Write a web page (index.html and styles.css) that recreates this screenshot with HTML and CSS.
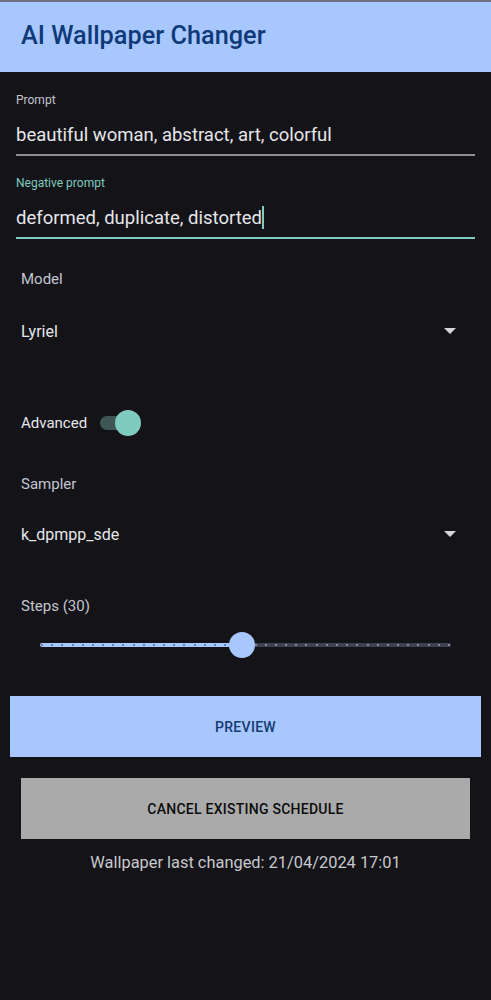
FILE: index.html
```html
<!DOCTYPE html>
<html>
<head>
<meta charset="utf-8">
<link rel="stylesheet" href="styles.css">
</head>
<body>
<div class="topline"></div>
<header class="appbar"><h1 class="title">AI Wallpaper Changer</h1></header>
<main class="content">
  <div class="field">
    <div class="field-label">Prompt</div>
    <div class="field-value">beautiful woman, abstract, art, colorful</div>
  </div>
  <div class="field focused">
    <div class="field-label">Negative prompt</div>
    <div class="field-value">deformed, duplicate, distorted<span class="caret"></span></div>
  </div>
  <div class="section model">
    <div class="sec-label">Model</div>
    <div class="dropdown"><span>Lyriel</span><span class="arrow"></span></div>
  </div>
  <div class="switch-row">
    <span class="switch-label">Advanced</span>
    <span class="switch"><span class="switch-track"></span><span class="switch-thumb"></span></span>
  </div>
  <div class="section sampler">
    <div class="sec-label">Sampler</div>
    <div class="dropdown"><span>k_dpmpp_sde</span><span class="arrow"></span></div>
  </div>
  <div class="section steps">
    <div class="sec-label">Steps (30)</div>
    <div class="slider">
      <div class="track">
        <div class="track-active"></div>
        <div class="track-inactive"></div>
        <div class="ticks" id="ticks"></div>
      </div>
      <div class="thumb"></div>
    </div>
  </div>
  <button class="btn-preview">PREVIEW</button>
  <button class="btn-cancel">CANCEL EXISTING SCHEDULE</button>
  <p class="status">Wallpaper last changed: 21/04/2024 17:01</p>
</main>
<script>
  var t = document.getElementById('ticks');
  for (var i = 0; i <= 40; i++) {
    var d = document.createElement('span');
    d.className = i < 20 ? 'tick on' : 'tick off';
    t.appendChild(d);
  }
</script>
</body>
</html>
```
FILE: styles.css
```css
* { box-sizing: border-box; }
html, body { margin: 0; padding: 0; }
body {
  width: 491px;
  height: 1000px;
  background: #131318;
  font-family: Roboto, "Noto Sans", sans-serif;
  overflow: hidden;
}
.topline { height: 2px; background: #6e7282; }
.appbar {
  height: 70px;
  background: #a9c7ff;
  display: flex;
  align-items: center;
  padding-left: 21px;
}
.title {
  margin: 0;
  font-size: 25.3px;
  font-weight: 500;
  color: #0f3a78;
  padding-bottom: 4px;
}
.field {
  margin: 0 16px;
  padding-top: 21px;
}
.field-label {
  font-size: 12px;
  color: #c4c6d0;
  line-height: 14px;
}
.field-value {
  font-size: 18.5px;
  color: #e6e6ea;
  line-height: 24px;
  padding: 16px 0 7px;
  border-bottom: 2px solid #8e8f94;
  position: relative;
}
.field.focused { padding-top: 20px; }
.focused .field-label { color: #80cbbf; }
.focused .field-value { border-bottom-color: #80cbbf; }
.caret {
  display: inline-block;
  width: 2px;
  height: 23px;
  background: #80cbbf;
  vertical-align: -5px;
}
.section { padding: 31px 21px 0; }
.sec-label {
  font-size: 15px;
  color: #c4c6d0;
  line-height: 18px;
}
.dropdown {
  display: flex;
  justify-content: space-between;
  align-items: center;
  font-size: 16px;
  color: #e6e6ea;
  height: 22px;
  margin-top: 32px;
  padding-right: 14px;
}
.arrow {
  width: 0; height: 0;
  border-left: 6px solid transparent;
  border-right: 6px solid transparent;
  border-top: 6px solid #d6d6da;
}
.switch-row {
  display: flex;
  align-items: center;
  padding: 0 21px;
  margin-top: 66px;
  height: 30px;
}
.switch-label { font-size: 15px; color: #e6e6ea; }
.switch {
  position: relative;
  width: 42px;
  height: 26px;
  margin-left: 13px;
}
.switch-track {
  position: absolute;
  left: 0; top: 6px;
  width: 36px; height: 14px;
  border-radius: 7px;
  background: #3d5755;
}
.switch-thumb {
  position: absolute;
  left: 15px; top: 0;
  width: 26px; height: 26px;
  border-radius: 50%;
  background: #80cbbf;
}
.section.sampler { padding-top: 37px; }
.sampler .dropdown { margin-top: 30px; }
.section.steps { padding-top: 52px; }
.slider {
  position: relative;
  height: 28px;
  margin: 16px 19px 0;
}
.track {
  position: absolute;
  left: 0; right: 0; top: 12px;
  height: 4px;
}
.track-active {
  position: absolute;
  left: 0; top: 0; height: 4px; width: 202px;
  background: #a9c7ff;
  border-radius: 2px 0 0 2px;
}
.track-inactive {
  position: absolute;
  left: 202px; right: 0; top: 0; height: 4px;
  background: #3e4152;
  border-radius: 0 2px 2px 0;
}
.ticks {
  position: absolute;
  left: 0; right: 0; top: 1px;
  display: flex;
  justify-content: space-between;
  padding: 0 1px;
}
.tick { width: 2px; height: 2px; border-radius: 50%; }
.tick.on { background: #4d6a9a; }
.tick.off { background: #9a9eb4; }
.thumb {
  position: absolute;
  left: 189px; top: 1px;
  width: 26px; height: 26px;
  border-radius: 50%;
  background: #a9c7ff;
}
button {
  display: flex;
  align-items: center;
  justify-content: center;
  border: none;
  font-family: Roboto, "Noto Sans", sans-serif;
  font-size: 14px;
  font-weight: 500;
  letter-spacing: 0.3px;
}
.btn-preview {
  width: 471px;
  height: 61px;
  margin: 37px 10px 0;
  background: #a9c7ff;
  color: #143b73;
}
.btn-cancel {
  width: 449px;
  height: 61px;
  margin: 21px 21px 0;
  background: #aaaaaa;
  color: #0c0c0c;
  letter-spacing: 0.25px;
}
.status {
  margin: 14px 0 0;
  text-align: center;
  font-size: 16.4px;
  color: #c8c8cc;
}
```
